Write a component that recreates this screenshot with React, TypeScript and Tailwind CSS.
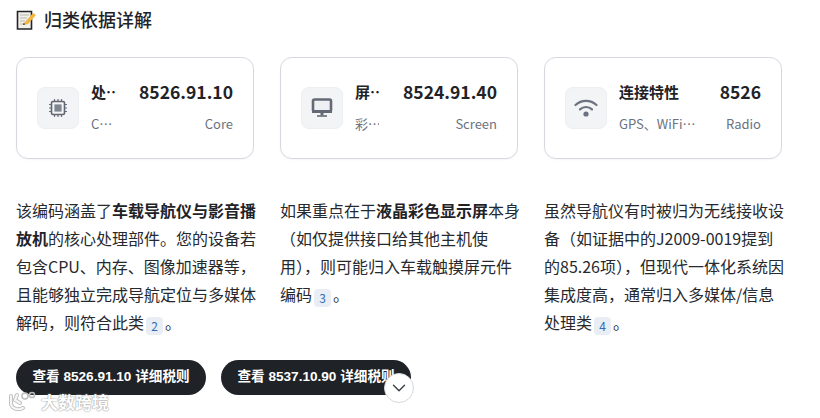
import React from "react";
import { ChevronDown } from "lucide-react";

const Ref = ({ n }: { n: number }) => (
  <span className="inline-flex items-center justify-center w-[17px] h-[18px] mx-[2px] rounded-[4px] bg-[#e9eef5] text-[#2f6bb8] text-[12px] leading-none align-[-2px]">{n}</span>
);

const CpuIcon = () => (
  <svg width="20" height="20" viewBox="0 0 20 20">
    <path d="M6.5 1v18M10 1v18M13.5 1v18M1 6.5h18M1 10h18M1 13.5h18" stroke="#6b7280" strokeWidth="1.2" />
    <rect x="3.5" y="3.5" width="13" height="13" rx="1.5" fill="#f3f4f6" stroke="#5f6672" strokeWidth="1.6" />
    <rect x="6.4" y="6.4" width="7.2" height="7.2" fill="#80868f" />
  </svg>
);

const ScreenIcon = () => (
  <svg width="22" height="20" viewBox="0 0 22 20">
    <rect x="2" y="1.5" width="18" height="12" rx="1.4" fill="#eef0f3" stroke="#646a75" strokeWidth="2.6" />
    <path d="M1 12h20v3H1z" fill="#646a75" />
    <path d="M9.5 15h3v2.2h-3z" fill="#646a75" />
    <path d="M6 17.2h10v1.6H6z" fill="#646a75" />
  </svg>
);

const WifiIcon = () => (
  <svg width="24" height="20" viewBox="0 0 24 20" fill="none">
    <path d="M1.5 7C7.5 1.4 16.5 1.4 22.5 7" stroke="#6b7280" strokeWidth="2.2" strokeLinecap="round" />
    <path d="M6 11.4C9.4 8.2 14.6 8.2 18 11.4" stroke="#6b7280" strokeWidth="2.2" strokeLinecap="round" />
    <circle cx="12" cy="16" r="2.6" fill="#6b7280" />
  </svg>
);

const Card = ({ icon, title, sub, code, en }: { icon: React.ReactNode; title: string; sub: string; code: string; en: string }) => (
  <div className="w-[238px] h-[102px] rounded-[12px] border border-[#d5d9df] bg-white px-[20px] flex items-center gap-[12px] shadow-[0_1px_2px_rgba(0,0,0,0.04)]">
    <div className="w-[42px] h-[42px] shrink-0 rounded-[8px] bg-[#f3f4f6] border border-[#eceef1] flex items-center justify-center">{icon}</div>
    <div className="flex-1 min-w-0 flex justify-between gap-[24px]">
      <div className="min-w-0 flex flex-col gap-[12px]">
        <div className="truncate text-[15px] leading-[20px] font-bold text-[#1f2328]">{title}</div>
        <div className="truncate text-[13px] leading-[20px] text-[#6b7280]">{sub}</div>
      </div>
      <div className="shrink-0 flex flex-col items-end gap-[12px]">
        <div className="text-[17.5px] leading-[20px] font-bold text-[#1f2328]">{code}</div>
        <div className="text-[13px] leading-[20px] text-[#6b7280]">{en}</div>
      </div>
    </div>
  </div>
);

const Button = ({ children }: { children: React.ReactNode }) => (
  <div className="w-[190px] h-[35px] rounded-full bg-[#1f2328] text-white text-[13.6px] font-bold flex items-center justify-center whitespace-nowrap overflow-hidden font-['Liberation_Sans','Noto_Sans_CJK_SC',sans-serif]">{children}</div>
);

export default function App() {
  return (
    <div className="relative w-[820px] h-[418px] overflow-hidden bg-white font-['Noto_Sans_CJK_SC','Noto_Sans',sans-serif] text-[#26292e]">
      <div className="px-[16px] pt-[7px]">
        <div className="flex items-center gap-[6px] h-[24px]">
          <svg width="22" height="22" viewBox="0 0 22 22" className="translate-y-[1px]">
            <path d="M1.5 2.5h14v17.5h-14z" fill="#f1f0ea" stroke="#222427" strokeWidth="1.6" />
            <path d="M4 6h9M4 9h7M4 12h5M4 15h4" stroke="#b9b9b4" strokeWidth="1" />
            <path d="M7 16l2-3 8-9 3 2-8 9z" fill="#f4b63f" />
            <path d="M7 16l.7-2 1.6 1.2z" fill="#222427" />
          </svg>
          <h2 className="text-[18px] leading-[24px] font-medium text-[#1f2328]">归类依据详解</h2>
        </div>
        <div className="mt-[26px] flex gap-[26px]">
          <Card icon={<CpuIcon />} title="处理器核心" sub="CPU、内存" code="8526.91.10" en="Core" />
          <Card icon={<ScreenIcon />} title="屏幕显示" sub="彩色液晶" code="8524.91.40" en="Screen" />
          <Card icon={<WifiIcon />} title="连接特性" sub="GPS、WiFi、蓝牙" code="8526" en="Radio" />
        </div>
        <div className="mt-[37px] grid grid-cols-[242px_242px_242px] gap-[22px] text-[16px] leading-[28px] h-[140px]">
          <p>该编码涵盖了<b className="font-bold text-[#1f2328]">车载导航仪与影音播放机</b>的核心处理部件。您的设备若包含CPU、内存、图像加速器等，且能够独立完成导航定位与多媒体解码，则符合此类<Ref n={2} />。</p>
          <p>如果重点在于<b className="font-bold text-[#1f2328]">液晶彩色显示屏</b>本身（如仅提供接口给其他主机使用），则可能归入车载触摸屏元件编码<Ref n={3} />。</p>
          <p>虽然导航仪有时被归为无线接收设备（如证据中的J2009-0019提到的85.26项），但现代一体化系统因集成度高，通常归入多媒体/信息处理类<Ref n={4} />。</p>
        </div>
        <div className="mt-[24px] flex gap-[15px]">
          <Button>查看 8526.91.10 详细税则</Button>
          <Button>查看 8537.10.90 详细税则</Button>
        </div>
      </div>
      <div className="absolute left-[384px] top-[373px] w-[30px] h-[30px] rounded-full bg-white border border-[#d5d9df] flex items-center justify-center text-[#3a3f45]">
        <ChevronDown size={22} strokeWidth={1.5} />
      </div>
      <div className="absolute left-[8px] top-[391px] flex items-center gap-[5px] text-white">
        <svg width="28" height="22" viewBox="0 0 28 22" fill="none">
          <g stroke="#bdbdbd" strokeWidth="4" strokeLinecap="round">
            <path d="M3 5v7c0 5 6 8 12 5" />
            <path d="M9 4L7 9l5 3" />
          </g>
          <g stroke="#f6f6f6" strokeWidth="2.2" strokeLinecap="round">
            <path d="M3 5v7c0 5 6 8 12 5" />
            <path d="M9 4L7 9l5 3" />
          </g>
          <circle cx="17" cy="5" r="3" stroke="#bdbdbd" strokeWidth="1.5" />
          <circle cx="24" cy="4" r="2.6" stroke="#bdbdbd" strokeWidth="1.5" />
        </svg>
        <span className="text-[17px] leading-[22px] font-bold [text-shadow:0_0_1px_#8f8f8f,0_0_2px_#a8a8a8]">大数跨境</span>
      </div>
    </div>
  );
}
